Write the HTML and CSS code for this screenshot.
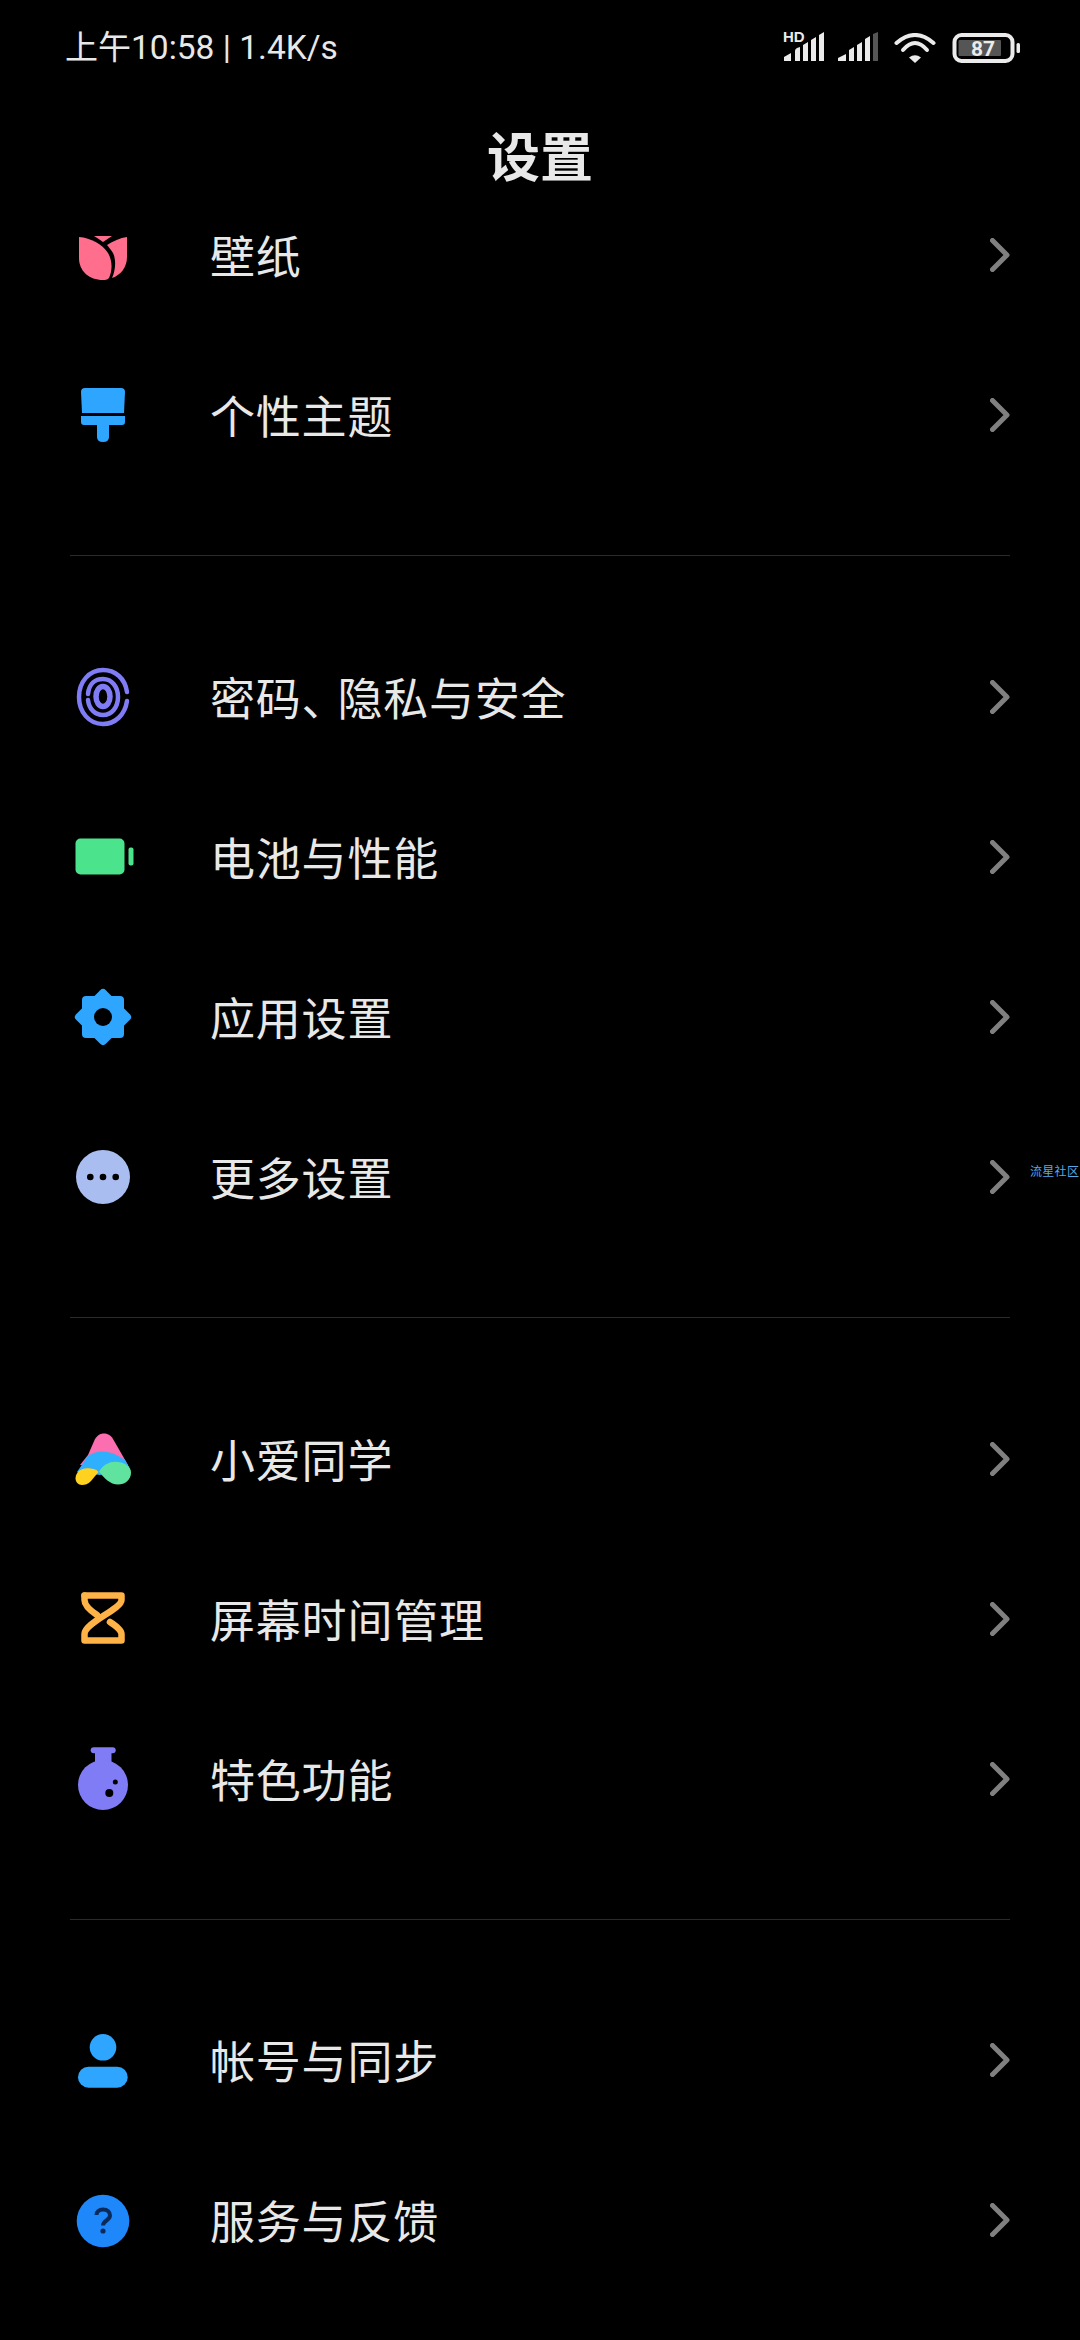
FILE: index.html
```html
<!DOCTYPE html>
<html lang="zh-CN">
<head>
    <meta charset="UTF-8">
    <meta name="viewport" content="width=device-width, initial-scale=1.0">
    <title>设置</title>
    <link rel="stylesheet" href="styles.css">
</head>
<body>
    <div class="page">
        <div class="status-bar">
            <div class="status-text"><span class="status-cjk">上午</span>10:58 | 1.4K/s</div>
            <div class="status-icons">
                <svg class="signal" width="41" height="32" viewBox="0 0 41 32">
                    <text class="hd-label" x="0" y="10">HD</text>
                    <path d="M1 29V25L8 21V29ZM12 29V19Q12 17 14 16L17 15V29ZM20 29V13L25 10V29ZM28 29V8L33 5V29ZM36 29V3L41 0V29Z" fill="#ebebeb"/>
                </svg>
                <svg class="signal" width="40" height="32" viewBox="0 0 40 32">
                    <path d="M0 29V26L8 22V29ZM11 29V18L16 15V29ZM19 29V13L24 10V29ZM27 29V7L32 4V29Z" fill="#ebebeb"/>
                    <path d="M35 29V2L40 0V29Z" fill="#555"/>
                </svg>
                <svg class="wifi" width="42" height="30" viewBox="0 0 42 30">
                    <path d="M2.5 10Q21 -6 39.5 10" fill="none" stroke="#ebebeb" stroke-width="4" stroke-linecap="round"/>
                    <path d="M9 17Q21 3 33 17" fill="none" stroke="#ebebeb" stroke-width="4" stroke-linecap="round"/>
                    <path d="M15 24.5Q21 20 27 24.5L21 30Z" fill="#ebebeb"/>
                </svg>
                <svg class="battery" width="68" height="30" viewBox="0 0 68 30">
                    <rect x="2.5" y="2" width="58" height="26" rx="7" fill="none" stroke="#ebebeb" stroke-width="4"/>
                    <rect x="6.5" y="7" width="42.5" height="16" rx="1" fill="#555"/>
                    <rect x="64.5" y="10" width="3.5" height="10" rx="1.5" fill="#ebebeb"/>
                    <text class="battery-label" x="31" y="22.5">87</text>
                </svg>
            </div>
        </div>

        <h1 class="title">设置</h1>

        <div class="settings">
            <div class="group">
                <div class="row">
                    <svg class="icon" viewBox="0 0 70 70">
                        <path d="M9 16C21 17 32 23 38 32C42 39 43 48 39 57C37 59 35 59 33 59C19 59 9 50 9 37Z" fill="#ff6f8d"/>
                        <path d="M57 16V36C57 46 51 54 42 57C46 48 46 38 43 32C41 29 39 26 37 24C43 20 50 17 57 16Z" fill="#ff6f8d"/>
                        <path d="M24 15H42L33 21Q29 18 24 15Z" fill="#ff6f8d"/>
                    </svg>
                    <span class="label">壁纸</span>
                    <svg class="chevron" viewBox="0 0 20 34"><path d="M2.5 2.5L17 17L2.5 31.5"/></svg>
                </div>
                <div class="row">
                    <svg class="icon" viewBox="0 0 70 70">
                        <path d="M15 7H51Q55 7 55 11L54 32H12L11 11Q11 7 15 7Z" fill="#2ea6ff"/>
                        <path d="M11 35H55V41Q55 44 52 44H39V56Q39 61 33 61Q27 61 27 56V44H14Q11 44 11 41Z" fill="#2ea6ff"/>
                    </svg>
                    <span class="label">个性主题</span>
                    <svg class="chevron" viewBox="0 0 20 34"><path d="M2.5 2.5L17 17L2.5 31.5"/></svg>
                </div>
            </div>

            <div class="group">
                <div class="row">
                    <svg class="icon" viewBox="0 0 70 70">
                        <g fill="none" stroke="#7f7cf5" stroke-width="4.5" stroke-linecap="round">
                            <path d="M57 29C55 15 45 7 33 7C19 7 9 19 9 34C9 49 19 61 33 61C45 61 55 52 57 38"/>
                            <path d="M18 31C19 21 25 16 33 16C42 16 48 24 48 34C48 44 42 52 33 52C25 52 19 46 18 37"/>
                            <ellipse cx="33" cy="33.5" rx="7" ry="10" stroke-width="5.5"/>
                        </g>
                    </svg>
                    <span class="label">密码<span class="comma">、</span>隐私与安全</span>
                    <svg class="chevron" viewBox="0 0 20 34"><path d="M2.5 2.5L17 17L2.5 31.5"/></svg>
                </div>
                <div class="row">
                    <svg class="icon" viewBox="0 0 70 70">
                        <rect x="5.5" y="15.5" width="49" height="36" rx="5" fill="#4be38c"/>
                        <rect x="58.5" y="24.5" width="5" height="18" rx="2" fill="#4be38c"/>
                    </svg>
                    <span class="label">电池与性能</span>
                    <svg class="chevron" viewBox="0 0 20 34"><path d="M2.5 2.5L17 17L2.5 31.5"/></svg>
                </div>
                <div class="row">
                    <svg class="icon" viewBox="0 0 70 70">
                        <rect x="12" y="13" width="42" height="42" rx="4" fill="#2ea6ff"/>
                        <rect x="12" y="13" width="42" height="42" rx="4" fill="#2ea6ff" transform="rotate(45 33 34)"/>
                        <circle cx="33" cy="34" r="9" fill="#000"/>
                    </svg>
                    <span class="label">应用设置</span>
                    <svg class="chevron" viewBox="0 0 20 34"><path d="M2.5 2.5L17 17L2.5 31.5"/></svg>
                </div>
                <div class="row">
                    <svg class="icon" viewBox="0 0 70 70">
                        <circle cx="33" cy="34" r="27" fill="#a9bdf0"/>
                        <circle cx="20.3" cy="34" r="3.3" fill="#000"/>
                        <circle cx="33" cy="34" r="3.3" fill="#000"/>
                        <circle cx="45.7" cy="34" r="3.3" fill="#000"/>
                    </svg>
                    <span class="label">更多设置</span>
                    <svg class="chevron" viewBox="0 0 20 34"><path d="M2.5 2.5L17 17L2.5 31.5"/></svg>
                </div>
            </div>

            <div class="group">
                <div class="row">
                    <svg class="icon" viewBox="0 0 70 70">
                        <path d="M25 14C28 9.500 31 8.500 34 8.500C37 8.500 41 10 43 14L58 40H10L18 30Z" fill="#fb6eb0"/>
                        <path d="M17.500 31.500Q33 20 55 35L59 42L30 50L7 47Z" fill="#2eb0ff"/>
                        <path d="M5.500 53C6 47 11 43.300 17 43.300C22 43.300 26 44 28.500 47L21 56C18 59 15 60 12 60C8 60 5.500 57 5.500 53Z" fill="#ffd21f"/>
                        <path d="M29 46.500C33 40 39 36.700 45 36.700C54 36.700 61 41 61 47.500C61 55 55 59.500 48 59.500C40 59.500 34 53 29 46.500Z" fill="#5fe39f"/>
                    </svg>
                    <span class="label">小爱同学</span>
                    <svg class="chevron" viewBox="0 0 20 34"><path d="M2.5 2.5L17 17L2.5 31.5"/></svg>
                </div>
                <div class="row">
                    <svg class="icon" viewBox="0 0 70 70">
                        <g fill="none" stroke="#ffb347" stroke-width="6.5" stroke-linejoin="round" stroke-linecap="round">
                            <path d="M14.500 10.500H51.500V15C51.500 24 14.500 38 14.500 49V55.500H51.500V49C51.500 45 46 41 40 37"/>
                            <path d="M14.500 10.500V15C14.500 21 21 26 27 30"/>
                        </g>
                    </svg>
                    <span class="label">屏幕时间管理</span>
                    <svg class="chevron" viewBox="0 0 20 34"><path d="M2.5 2.5L17 17L2.5 31.5"/></svg>
                </div>
                <div class="row">
                    <svg class="icon" viewBox="0 0 70 70">
                        <rect x="20.700" y="2.300" width="25" height="6" rx="3" fill="#7f7cf5"/>
                        <rect x="25" y="6" width="16.500" height="14" fill="#7f7cf5"/>
                        <circle cx="33" cy="40" r="25" fill="#7f7cf5"/>
                        <circle cx="39.300" cy="48" r="4" fill="#000"/>
                        <circle cx="45.300" cy="37" r="2.500" fill="#000"/>
                    </svg>
                    <span class="label">特色功能</span>
                    <svg class="chevron" viewBox="0 0 20 34"><path d="M2.5 2.5L17 17L2.5 31.5"/></svg>
                </div>
            </div>

            <div class="group">
                <div class="row">
                    <svg class="icon" viewBox="0 0 70 70">
                        <circle cx="33" cy="22.300" r="13.300" fill="#2ea6ff"/>
                        <rect x="8" y="41.700" width="49.700" height="21" rx="10.500" fill="#2ea6ff"/>
                    </svg>
                    <span class="label">帐号与同步</span>
                    <svg class="chevron" viewBox="0 0 20 34"><path d="M2.5 2.5L17 17L2.5 31.5"/></svg>
                </div>
                <div class="row">
                    <svg class="icon" viewBox="0 0 70 70">
                        <circle cx="33" cy="36" r="26.300" fill="#1e88fa"/>
                        <path d="M26.500 30C26.500 26.500 29 24.500 33 24.500C37.500 24.500 40 27 40 30.500C40 35.500 33 35.500 33 40.500" fill="none" stroke="#0a2a5c" stroke-width="4"/>
                        <circle cx="33" cy="46" r="2.600" fill="#0a2a5c"/>
                    </svg>
                    <span class="label">服务与反馈</span>
                    <svg class="chevron" viewBox="0 0 20 34"><path d="M2.5 2.5L17 17L2.5 31.5"/></svg>
                </div>
            </div>
        </div>

        <div class="floating-tag">流星社区</div>
    </div>
</body>
</html>
```

FILE: styles.css
```css
* {
    box-sizing: border-box;
}
html, body {
    margin: 0;
    background-color: #000;
}
body {
    font-family: "Noto Sans CJK SC", "Noto Sans", sans-serif;
    color: #e8e8e8;
}
.page {
    position: relative;
    width: 1080px;
    height: 2340px;
    overflow: hidden;
    background-color: #000;
}
.status-bar {
    display: flex;
    justify-content: space-between;
    align-items: center;
    height: 96px;
    padding: 0 60px 0 65px;
}
.status-text {
    margin-bottom: 3px;
    font-family: Roboto, "Noto Sans CJK SC", sans-serif;
    font-size: 33.5px;
    line-height: 40px;
    color: #e8e8e8;
}
.status-cjk {
    font-family: "Noto Sans CJK SC", sans-serif;
    font-size: 33px;
}
.status-icons {
    display: flex;
    align-items: center;
    gap: 14px;
}
.signal {
    display: block;
    overflow: visible;
}
.wifi {
    display: block;
    margin-left: 2px;
}
.battery {
    display: block;
    margin-left: 2px;
}
.hd-label {
    font-family: "Liberation Sans", sans-serif;
    font-size: 15px;
    font-weight: 700;
    fill: #ebebeb;
}
.battery-label {
    font-family: Roboto, sans-serif;
    font-size: 21px;
    font-weight: 700;
    text-anchor: middle;
    fill: #ebebeb;
}
.title {
    margin: 0;
    height: 93px;
    padding-top: 26px;
    font-size: 53px;
    line-height: 64px;
    font-weight: 700;
    text-align: center;
    color: #e8e8e8;
}
.settings {
    margin-top: -14px;
}
.group {
    margin: 0 70px;
    padding: 61px 0 60px;
    border-bottom: 1px solid #2b2b2b;
}
.group:first-child {
    padding-top: 0;
}
.group:last-child {
    padding-top: 60px;
    border-bottom: none;
}
.row {
    display: flex;
    align-items: center;
    height: 160px;
}
.icon {
    flex: none;
    width: 70px;
    height: 70px;
    margin-top: 2px;
    margin-right: 70px;
}
.group:last-child .icon {
    margin-top: 0;
}
.label {
    flex: 1;
    font-size: 45px;
    line-height: 60px;
    letter-spacing: 0.8px;
    color: #e8e8e8;
}
.comma {
    letter-spacing: -9.2px;
}
.chevron {
    flex: none;
    width: 20px;
    height: 34px;
    fill: none;
    stroke: #808080;
    stroke-width: 5;
    stroke-linecap: round;
    stroke-linejoin: round;
}
.floating-tag {
    position: absolute;
    left: 1030px;
    top: 1162px;
    font-size: 12px;
    line-height: 18px;
    letter-spacing: 0.3px;
    white-space: nowrap;
    color: #5aa7e6;
}
```
